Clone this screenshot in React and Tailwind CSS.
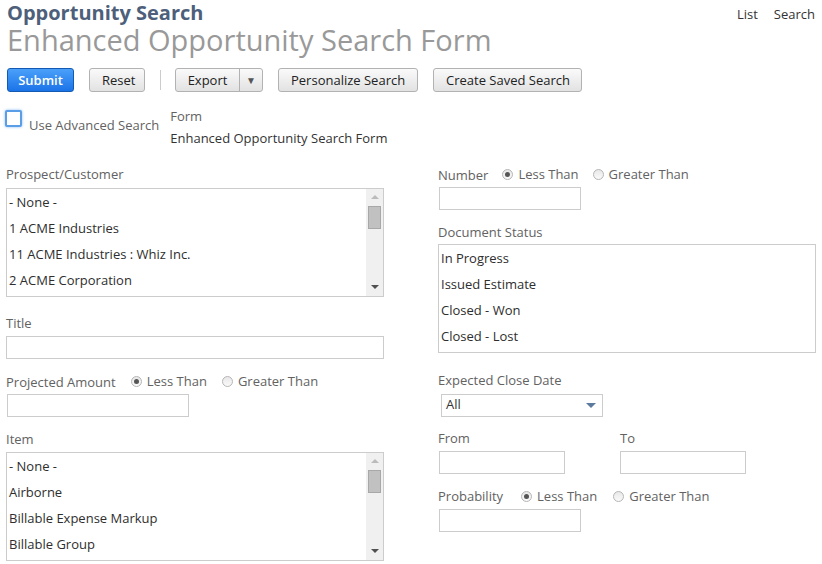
import React from "react";

const Btn = ({ children, className = "" }) => (
  <button
    className={`h-[24px] whitespace-nowrap rounded-[3px] border border-[#b2b2b2] bg-gradient-to-b from-[#fafafa] to-[#e2e2e2] px-[12px] text-[13px] leading-[22px] text-[#222] ${className}`}
  >
    {children}
  </button>
);

const Label = ({ children, className = "" }) => (
  <div className={`text-[13px] leading-[18px] text-[#626262] ${className}`}>{children}</div>
);

const Radio = ({ checked, label }) => (
  <span className="flex items-center gap-[5px] whitespace-nowrap text-[13px] text-[#626262]">
    <span className="flex h-[11px] w-[11px] items-center justify-center rounded-full border border-[#b5b5b5] bg-gradient-to-b from-[#e8e8e8] to-[#fafafa]">
      {checked ? <span className="h-[5px] w-[5px] rounded-full bg-[#555]" /> : null}
    </span>
    {label}
  </span>
);

const Input = ({ className = "" }) => (
  <div className={`h-[23px] border border-[#ccc] bg-white ${className}`} />
);

const ListBox = ({ items, scroll }) => (
  <div className="relative h-[109px] w-[378px] overflow-hidden border border-[#ccc] bg-white">
    <div className="pl-[2px]">
      {items.map((item) => (
        <div key={item} className="h-[26px] whitespace-nowrap text-[13px] leading-[26px] text-[#2e2e2e]">
          {item}
        </div>
      ))}
    </div>
    {scroll ? (
      <div className="absolute right-0 top-0 flex h-full w-[17px] flex-col items-center bg-[#f0f0f0]">
        <span className="mt-[6px] h-0 w-0 border-x-[4px] border-b-[4px] border-x-transparent border-b-[#bbb]" />
        <span className="mt-[7px] h-[23px] w-[13px] border border-[#a8a8a8] bg-[#c1c1c1]" />
        <span className="mt-auto mb-[7px] h-0 w-0 border-x-[4px] border-t-[4px] border-x-transparent border-t-[#505050]" />
      </div>
    ) : null}
  </div>
);

export default function App() {
  return (
    <div className="relative h-[564px] w-[822px] overflow-hidden bg-white font-['Open_Sans',sans-serif]">
      <div className="flex justify-between px-[7px]">
        <div>
          <h1 className="pt-[1px] text-[20px] font-bold leading-[23px] text-[#4d5f7a]">
            Opportunity Search
          </h1>
          <h2 className="text-[29px] leading-[32px] text-[#999]">
            Enhanced Opportunity Search Form
          </h2>
        </div>
        <nav className="flex gap-[16px] pt-[5px] text-[13px] leading-[18px] text-[#333]">
          <span>List</span>
          <span>Search</span>
        </nav>
      </div>

      <div className="mt-[12px] flex items-center px-[7px]">
        <button className="h-[24px] w-[67px] whitespace-nowrap rounded-[3px] border border-[#125ab2] bg-gradient-to-b from-[#4aa0f9] to-[#1a73e8] text-[13px] font-semibold leading-[22px] text-white">
          Submit
        </button>
        <Btn className="ml-[15px] w-[56px] px-0">Reset</Btn>
        <span className="ml-[15px] h-[20px] w-px bg-[#ccc]" />
        <div className="ml-[14px] flex h-[24px] rounded-[3px] border border-[#b2b2b2] bg-gradient-to-b from-[#fafafa] to-[#e2e2e2] text-[13px] leading-[22px] text-[#222]">
          <span className="w-[63px] text-center">Export</span>
          <span className="flex w-[23px] items-center justify-center border-l border-[#b2b2b2] text-[10px] text-[#555]">
            ▼
          </span>
        </div>
        <Btn className="ml-[15px] w-[140px] px-0">Personalize Search</Btn>
        <Btn className="ml-[15px] w-[149px] px-0">Create Saved Search</Btn>
      </div>

      <div className="mt-[13px] flex items-start px-[5px]">
        <div className="mt-[5px] h-[17px] w-[17px] rounded-[2px] border-2 border-[#5b9ee8] bg-white shadow-[0_0_3px_#8cbcf2]" />
        <span className="ml-[7px] mt-[11px] text-[13px] leading-[18px] text-[#626262]">
          Use Advanced Search
        </span>
        <div className="ml-[11px] text-[13px] leading-[22px] text-[#333]">
          <div className="text-[#626262]">Form</div>
          <div>Enhanced Opportunity Search Form</div>
        </div>
      </div>

      <div className="mt-[16px] flex px-[6px]">
        <div className="w-[378px]">
          <Label>Prospect/Customer</Label>
          <div className="mt-[5px]">
            <ListBox
              scroll
              items={["- None -", "1 ACME Industries", "11 ACME Industries : Whiz Inc.", "2 ACME Corporation"]}
            />
          </div>
          <Label className="mt-[17px]">Title</Label>
          <Input className="mt-[4px] w-[378px]" />
          <div className="mt-[13px] flex items-center gap-[15px]">
            <Label>Projected Amount</Label>
            <Radio checked label="Less Than" />
            <Radio label="Greater Than" />
          </div>
          <Input className="ml-px mt-[2px] w-[182px]" />
          <Label className="mt-[13px]">Item</Label>
          <div className="mt-[4px]">
            <ListBox
              scroll
              items={["- None -", "Airborne", "Billable Expense Markup", "Billable Group"]}
            />
          </div>
        </div>

        <div className="ml-[54px] w-[378px]">
          <div className="flex items-center gap-[14px]">
            <Label>Number</Label>
            <Radio checked label="Less Than" />
            <Radio label="Greater Than" />
          </div>
          <Input className="ml-px mt-[2px] w-[142px]" />
          <Label className="mt-[13px]">Document Status</Label>
          <div className="mt-[3px]">
            <ListBox items={["In Progress", "Issued Estimate", "Closed - Won", "Closed - Lost"]} />
          </div>
          <Label className="mt-[18px]">Expected Close Date</Label>
          <div className="ml-[3px] mt-[5px] flex h-[23px] w-[162px] items-center justify-between border border-[#ccc] bg-white pl-[4px] pr-[6px] text-[13px] text-[#333]">
            <span>All</span>
            <span className="h-0 w-0 border-x-[5px] border-t-[5px] border-x-transparent border-t-[#5b7a9d]" />
          </div>
          <div className="mt-[12px] flex">
            <div>
              <Label>From</Label>
              <Input className="ml-px mt-[4px] w-[126px]" />
            </div>
            <div className="ml-[55px]">
              <Label>To</Label>
              <Input className="mt-[4px] w-[126px]" />
            </div>
          </div>
          <div className="mt-[13px] flex items-center gap-[16px]">
            <Label className="pr-[2px]">Probability</Label>
            <Radio checked label="Less Than" />
            <Radio label="Greater Than" />
          </div>
          <Input className="ml-px mt-[3px] w-[142px]" />
        </div>
      </div>
    </div>
  );
}
